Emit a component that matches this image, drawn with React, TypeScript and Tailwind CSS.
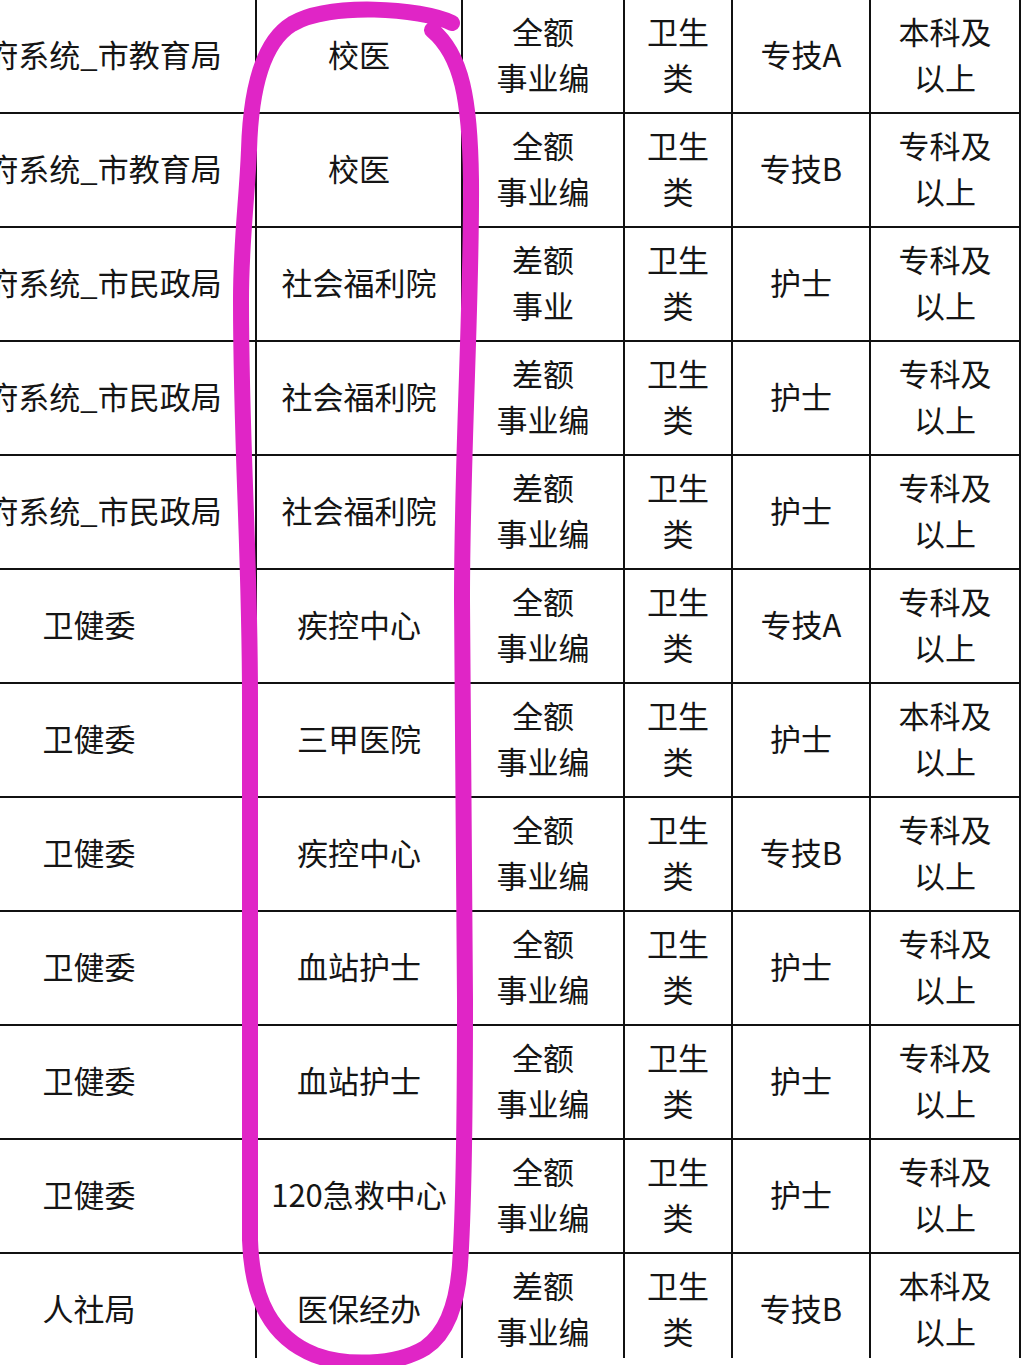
import React from "react";

type Row = [string, string, string[], string[], string, string[]];

const rows: Row[] = [
  ["政府系统_市教育局", "校医", ["全额", "事业编"], ["卫生", "类"], "专技A", ["本科及", "以上"]],
  ["政府系统_市教育局", "校医", ["全额", "事业编"], ["卫生", "类"], "专技B", ["专科及", "以上"]],
  ["政府系统_市民政局", "社会福利院", ["差额", "事业"], ["卫生", "类"], "护士", ["专科及", "以上"]],
  ["政府系统_市民政局", "社会福利院", ["差额", "事业编"], ["卫生", "类"], "护士", ["专科及", "以上"]],
  ["政府系统_市民政局", "社会福利院", ["差额", "事业编"], ["卫生", "类"], "护士", ["专科及", "以上"]],
  ["卫健委", "疾控中心", ["全额", "事业编"], ["卫生", "类"], "专技A", ["专科及", "以上"]],
  ["卫健委", "三甲医院", ["全额", "事业编"], ["卫生", "类"], "护士", ["本科及", "以上"]],
  ["卫健委", "疾控中心", ["全额", "事业编"], ["卫生", "类"], "专技B", ["专科及", "以上"]],
  ["卫健委", "血站护士", ["全额", "事业编"], ["卫生", "类"], "护士", ["专科及", "以上"]],
  ["卫健委", "血站护士", ["全额", "事业编"], ["卫生", "类"], "护士", ["专科及", "以上"]],
  ["卫健委", "120急救中心", ["全额", "事业编"], ["卫生", "类"], "护士", ["专科及", "以上"]],
  ["人社局", "医保经办", ["差额", "事业编"], ["卫生", "类"], "专技B", ["本科及", "以上"]],
];

function Lines({ lines }: { lines: string[] }) {
  return (
    <div className="flex flex-col items-center">
      {lines.map((l, i) => (
        <span key={i} className="block whitespace-nowrap">
          {l}
        </span>
      ))}
    </div>
  );
}

const cell =
  "shrink-0 flex items-center justify-center border-r-2 border-[#111] pb-[4px] text-center whitespace-nowrap";

export default function App() {
  return (
    <div
      className="relative w-[1024px] h-[1365px] overflow-hidden bg-white text-[#151515] text-[31px] leading-[46px]"
      style={{ fontFamily: '"Noto Sans CJK SC", "Noto Sans", sans-serif' }}
    >
      <div className="h-[1358px] overflow-hidden">
        <div className="ml-[-77px] w-[1098px] flex flex-col">
          {rows.map((r, i) => (
            <div key={i} className="flex h-[114px] shrink-0 border-b-2 border-[#111]">
              <div className={`${cell} w-[334px]`}>{r[0]}</div>
              <div className={`${cell} w-[206px]`}>{r[1]}</div>
              <div className={`${cell} w-[162px]`}>
                <Lines lines={r[2]} />
              </div>
              <div className={`${cell} w-[108px]`}>
                <Lines lines={r[3]} />
              </div>
              <div className={`${cell} w-[138px]`}>{r[4]}</div>
              <div className={`${cell} w-[150px]`}>
                <Lines lines={r[5]} />
              </div>
            </div>
          ))}
        </div>
      </div>
      <div className="h-[7px] bg-white" />
      <svg
        className="absolute left-0 top-0 pointer-events-none"
        width="1024"
        height="1365"
        viewBox="0 0 1024 1365"
      >
        <path
          d="M 452 23 C 420 8, 330 2, 292 24 C 266 40, 251 80, 249 150 C 247 200, 241 240, 241 300 C 241 450, 250 550, 250 700 L 250 1240 C 252 1300, 272 1338, 315 1355 C 345 1366, 395 1366, 425 1348 C 447 1333, 457 1305, 460 1265 C 463 1220, 465 1150, 465 1000 L 462 600 C 462 450, 472 300, 471 180 C 470 100, 462 55, 432 30"
          fill="none"
          stroke="#e025c6"
          strokeWidth="16"
          strokeLinecap="round"
          strokeLinejoin="round"
        />
      </svg>
    </div>
  );
}
